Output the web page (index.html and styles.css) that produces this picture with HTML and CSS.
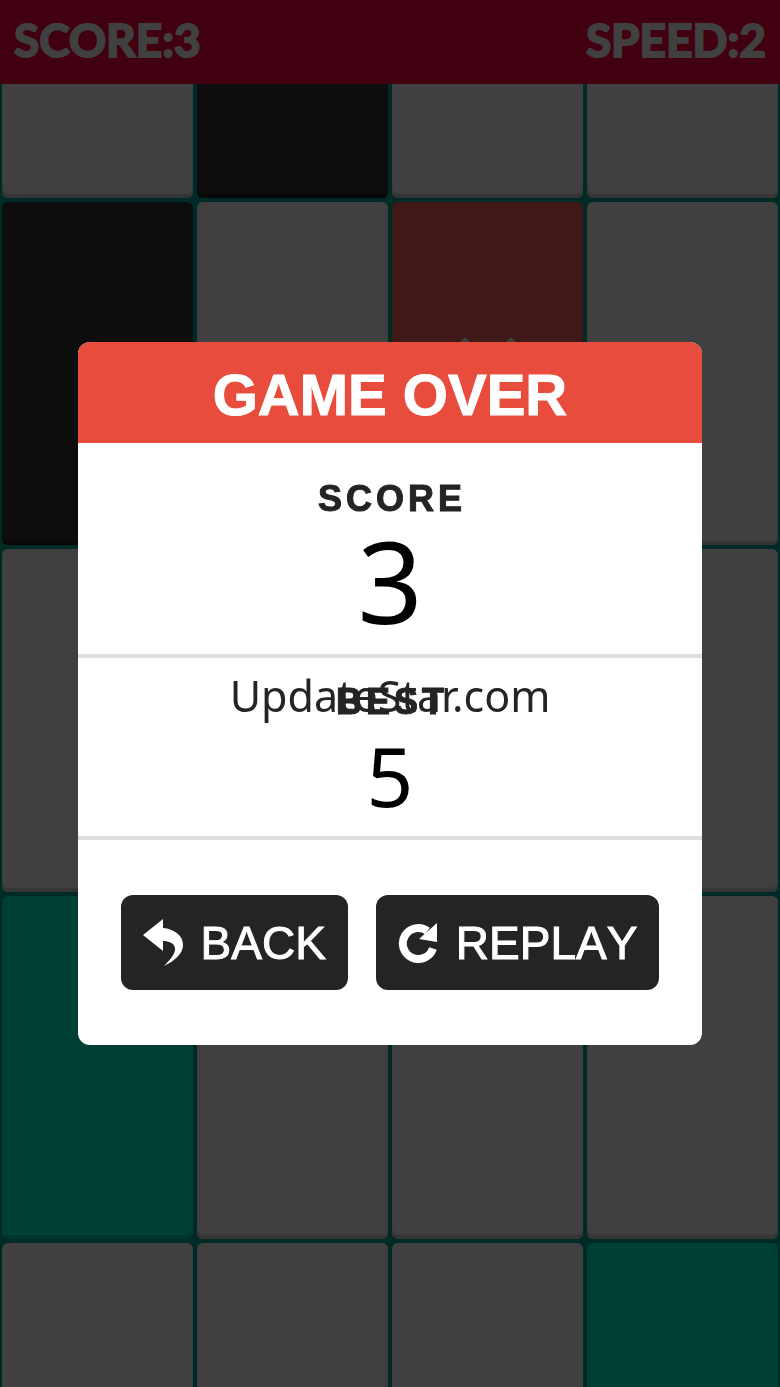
FILE: index.html
```html
<!DOCTYPE html>
<html lang="en">
<head>
    <meta charset="UTF-8">
    <meta name="viewport" content="width=device-width, initial-scale=1.0">
    <title>Game Over</title>
    <link rel="stylesheet" href="styles.css">
</head>
<body>
    <div class="game">
        <header class="status">
            <span>SCORE:3</span>
            <span>SPEED:2</span>
        </header>
        <div class="board">
            <div class="tile"></div>
            <div class="tile black"></div>
            <div class="tile"></div>
            <div class="tile"></div>

            <div class="tile black"></div>
            <div class="tile"></div>
            <div class="tile wrong">
                <svg width="74" height="74" viewBox="-37 -37 74 74" aria-hidden="true">
                    <path d="M-23 -37L0 -14L23 -37L37 -23L14 0L37 23L23 37L0 14L-23 37L-37 23L-14 0L-37 -23Z" fill="#fff"/>
                </svg>
            </div>
            <div class="tile"></div>

            <div class="tile"></div>
            <div class="tile"></div>
            <div class="tile"></div>
            <div class="tile"></div>

            <div class="tile hit"></div>
            <div class="tile"></div>
            <div class="tile"></div>
            <div class="tile"></div>

            <div class="tile"></div>
            <div class="tile"></div>
            <div class="tile"></div>
            <div class="tile hit"></div>
        </div>
    </div>

    <div class="overlay">
        <main class="dialog">
            <h1>GAME OVER</h1>
            <section class="result score">
                <h2>SCORE</h2>
                <p>3</p>
            </section>
            <section class="result best">
                <h2>BEST</h2>
                <p>5</p>
            </section>
            <div class="actions">
                <button type="button">
                    <svg width="40" height="48" viewBox="0 0 40 48" aria-hidden="true">
                        <path d="M0 16L20 0V9C31 10 40 16 40 26C40 35 31 42 21 47C27 41 33 34 32 29C31 24 26 22 20 22V32Z" fill="#fff"/>
                    </svg>
                    BACK
                </button>
                <button type="button">
                    <svg width="40" height="40" viewBox="0 0 40 40" aria-hidden="true">
                        <path d="M35 25.500A15.500 15.500 0 1 1 29.500 8" fill="none" stroke="#fff" stroke-width="8"/>
                        <path d="M39 0V19L21 16Z" fill="#fff"/>
                    </svg>
                    REPLAY
                </button>
            </div>
        </main>
        <div class="watermark">UpdateStar.com</div>
    </div>
</body>
</html>
```

FILE: styles.css
```css
* {
    box-sizing: border-box;
}
body {
    margin: 0;
    font-family: "Liberation Sans", Arial, sans-serif;
    background: #00a898;
}
h1, h2, p {
    margin: 0;
}
.game {
    display: flex;
    flex-direction: column;
    height: 100vh;
    overflow: hidden;
}
.status {
    display: flex;
    flex: none;
    justify-content: space-between;
    height: 84px;
    padding: 0 14px;
    background: #ff0040;
    color: #fff;
    font: 700 46px/80px Lato, sans-serif;
    -webkit-text-stroke: 2px #fff;
}
.board {
    display: grid;
    grid-template-columns: repeat(4, 1fr);
    grid-template-rows: 114px;
    grid-auto-rows: 343px;
    gap: 4px;
    padding: 0 2px;
}
.tile {
    display: flex;
    justify-content: center;
    align-items: center;
    background: #fff;
    border-radius: 6px;
    box-shadow: inset 0 -4px 2px #d0d0d0;
}
.tile:nth-child(-n+4) {
    border-radius: 0 0 6px 6px;
}
.tile.black {
    background: #343434;
    box-shadow: inset 0 -4px 2px #202020;
}
.tile.wrong {
    background: #ff6060;
    box-shadow: inset 0 -4px 2px #d04040;
}
.tile.hit {
    background: #00ffc8;
    box-shadow: inset 0 -4px 2px #00d8a8;
}
.overlay {
    position: fixed;
    inset: 0;
    display: flex;
    justify-content: center;
    align-items: center;
    background: rgba(0, 0, 0, 0.75);
}
.dialog {
    width: 80%;
    background: #fff;
    border-radius: 12px;
    overflow: hidden;
    text-align: center;
}
.dialog h1 {
    padding-top: 4px;
    background: #e74c3c;
    color: #fff;
    font-size: 58px;
    line-height: 97px;
    -webkit-text-stroke: 1px #fff;
}
.result {
    border-bottom: 4px solid #dfdfdf;
}
.result h2 {
    color: #242424;
    font-size: 36px;
    line-height: 40px;
    letter-spacing: 4px;
    text-indent: 4px;
    -webkit-text-stroke: 1px #242424;
}
.result p {
    color: #000;
    font-family: "Noto Sans", sans-serif;
}
.score {
    padding: 36px 0 13px;
}
.score p {
    font-size: 114px;
    line-height: 122px;
}
.best {
    padding: 24px 0 8px;
}
.best p {
    font-size: 82px;
    line-height: 106px;
}
.actions {
    display: flex;
    justify-content: center;
    gap: 28px;
    padding: 55px 0;
}
button {
    display: flex;
    align-items: center;
    gap: 18px;
    height: 95px;
    padding: 0 22px;
    border: none;
    border-radius: 12px;
    background: #242424;
    color: #fff;
    font: 46px "Liberation Sans", Arial, sans-serif;
    font-kerning: none;
    -webkit-text-stroke: 1px #fff;
    cursor: pointer;
}
.watermark {
    position: absolute;
    padding-top: 4px;
    color: #242424;
    font: 43px "Noto Sans", sans-serif;
}
```
